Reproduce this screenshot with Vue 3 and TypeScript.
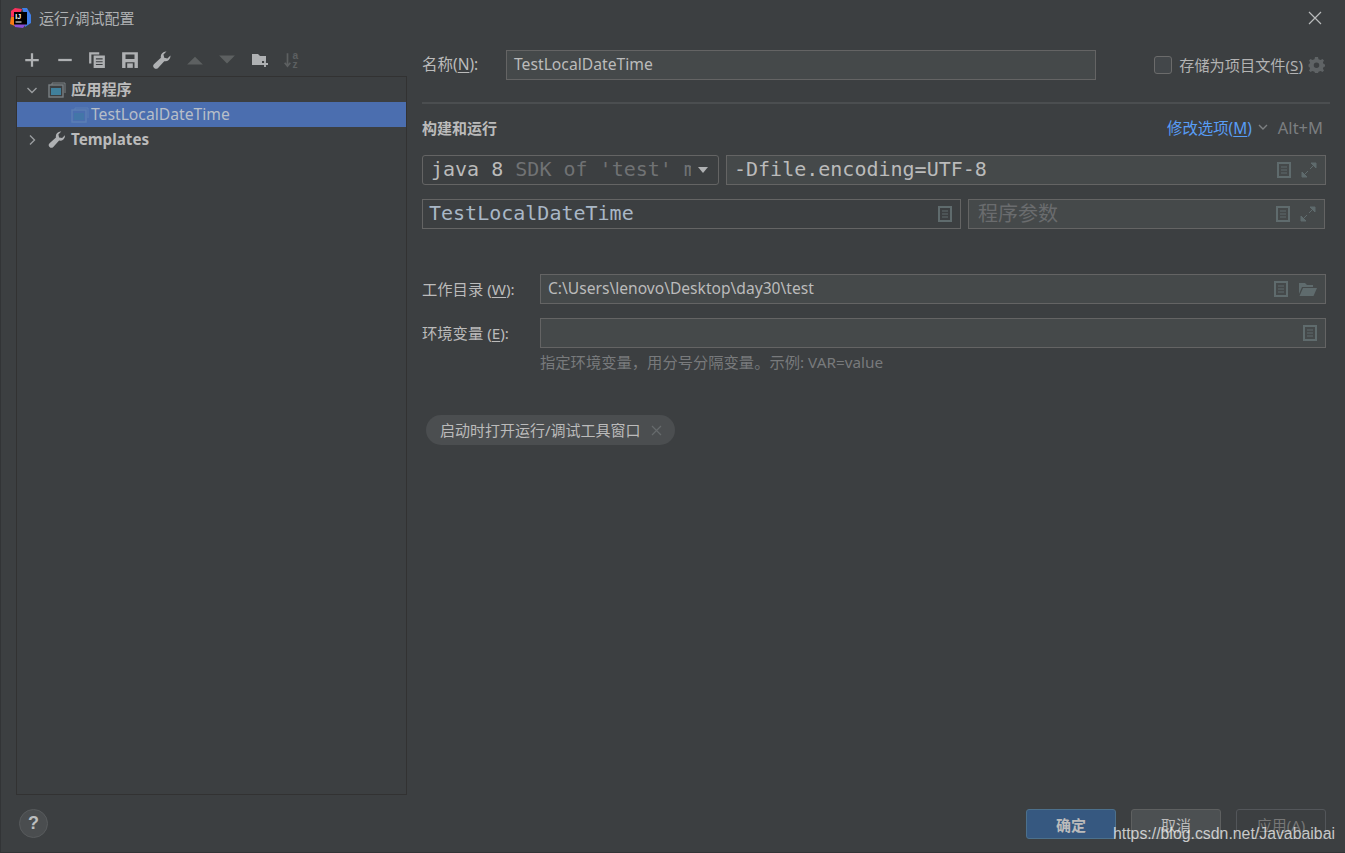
<script setup lang="ts">
const ui = 'x'
void ui
</script>

<template>
  <div class="dialog">
    <header class="titlebar">
      <svg class="logo" width="21" height="20" viewBox="0 0 21 20">
        <path d="M1 3 L5 0 L12 1 L9 8 L1 9 Z" fill="#fe315d" />
        <path d="M12 0 L17 0 L21 7 L21 15 L15 19 L14 6 Z" fill="#3f7fe8" />
        <path d="M1 9 L5 9 L5 18 L0 16 Z" fill="#f97a12" />
        <path d="M4 16 L16 16 L13 20 L5 19 Z" fill="#8a4fd8" />
        <rect x="4" y="4" width="13" height="12.5" fill="#000" />
        <rect x="5.5" y="13.5" width="6" height="1" fill="#fff" />
        <text x="5.2" y="11" class="logotext">IJ</text>
      </svg>
      <span class="title">运行/调试配置</span>
      <svg class="close" width="14" height="14" viewBox="0 0 14 14">
        <path d="M1 1 L13 13 M13 1 L1 13" stroke="#b9bbbc" stroke-width="1.2" fill="none" />
      </svg>
    </header>

    <div class="body">
      <aside class="left">
        <div class="toolbar">
          <svg class="tool" viewBox="0 0 16 16"><path d="M8 2 V14 M2 8 H14" stroke="#afb1b3" stroke-width="2" /></svg>
          <svg class="tool" viewBox="0 0 16 16"><path d="M2 8 H14" stroke="#afb1b3" stroke-width="2" /></svg>
          <svg class="tool" viewBox="0 0 16 16"><path d="M1 1 H10 V3 H3 V11 H1 Z M5 4 H15 V15 H5 Z" fill="#afb1b3" /><path d="M7 7 H13 M7 9.5 H13 M7 12 H13" stroke="#3c3f41" stroke-width="1" /></svg>
          <svg class="tool" viewBox="0 0 16 16"><path fill-rule="evenodd" d="M1 1 H15 V15 H1 Z M4 3 V7 H12 V3 Z M4 10 V15 H12 V10 Z" fill="#afb1b3" /><rect x="5.5" y="11" width="5" height="4" fill="#afb1b3" /></svg>
          <svg class="tool" viewBox="0 0 16 16"><path d="M15.5 4 A4.6 4.6 0 0 1 10 9 L4.5 15 A2 2 0 0 1 1 11.5 L7 6 A4.6 4.6 0 0 1 12 0.5 L9.3 3.2 L10 6 L12.8 6.7 Z" fill="#afb1b3" /></svg>
          <svg class="tool" viewBox="0 0 16 16"><path d="M1 12 L8 5 L15 12 Z" fill="#5d6061" /></svg>
          <svg class="tool" viewBox="0 0 16 16"><path d="M1 4 L8 11 L15 4 Z" fill="#5d6061" /></svg>
          <svg class="tool" viewBox="0 0 18 16"><path d="M1 2 H7 L9 4 H15 V9 H11 V13 H1 Z" fill="#afb1b3" /><path d="M14 9 V15 M11 12 H17" stroke="#afb1b3" stroke-width="1.8" /></svg>
          <svg class="tool" viewBox="0 0 16 16"><path d="M4 2 V13 M1.5 10.5 L4 13.5 L6.5 10.5" stroke="#5d6061" stroke-width="1.5" fill="none" /><text x="8.5" y="7" class="az">a</text><text x="8.5" y="15" class="az">z</text></svg>
        </div>
        <div class="tree">
          <div class="node bold">
            <svg class="arrow" width="12" height="12" viewBox="0 0 12 12"><path d="M1.5 4 L6 8.5 L10.5 4" stroke="#9a9d9f" stroke-width="1.4" fill="none" /></svg>
            <svg class="nodeicon" width="18" height="16" viewBox="0 0 18 16">
              <path d="M4 1 H17 V11 M4 1 V3" stroke="#7a8184" stroke-width="1" fill="none" />
              <rect x="1" y="3" width="14" height="12" fill="#3c3f41" stroke="#7a8184" stroke-width="1.4" />
              <rect x="3" y="6" width="10" height="7" fill="#40809c" />
            </svg>
            <span class="cjknode">应用程序</span>
          </div>
          <div class="node selected">
            <svg class="nodeicon" width="18" height="16" viewBox="0 0 18 16">
              <path d="M4 1 H17 V11 M4 1 V3" stroke="#5d7fb5" stroke-width="1" fill="none" />
              <rect x="1" y="3" width="14" height="12" fill="#4b6eaf" stroke="#5d7fb5" stroke-width="1.4" />
              <rect x="3" y="6" width="10" height="7" fill="#4376a8" />
            </svg>
            <span class="latinnode">TestLocalDateTime</span>
          </div>
          <div class="node bold">
            <svg class="arrow" width="12" height="12" viewBox="0 0 12 12"><path d="M4 1.5 L8.5 6 L4 10.5" stroke="#9a9d9f" stroke-width="1.4" fill="none" /></svg>
            <svg class="nodeicon" width="18" height="17" viewBox="0 0 16 16"><path d="M15.5 4 A4.6 4.6 0 0 1 10 9 L4.5 15 A2 2 0 0 1 1 11.5 L7 6 A4.6 4.6 0 0 1 12 0.5 L9.3 3.2 L10 6 L12.8 6.7 Z" fill="#afb1b3" /></svg>
            <span class="latinnode">Templates</span>
          </div>
        </div>
      </aside>

      <main class="right">
        <div class="namerow">
          <label class="namelabel">名称(<u>N</u>):</label>
          <div class="field namefield"><span class="grow">TestLocalDateTime</span></div>
          <div class="store">
            <span class="check"></span>
            <span class="storetext">存储为项目文件(<u>S</u>)</span>
            <svg width="18" height="18" viewBox="0 0 18 18">
              <path fill-rule="evenodd" d="M7 1 H10 L10.5 3.2 L12.6 4 L14.5 2.9 L16 4.5 L14.9 6.3 L15.6 8 L17 8.5 V10.5 L15.6 11 L14.9 12.7 L16 14.5 L14.5 16 L12.6 14.9 L10.5 15.7 L10 17 H7 L6.5 15.7 L4.4 14.9 L2.5 16 L1 14.5 L2.1 12.7 L1.4 11 L0.5 10.5 V8.5 L1.4 8 L2.1 6.3 L1 4.5 L2.5 2.9 L4.4 4 L6.5 3.2 Z M8.5 6.5 A2.7 2.7 0 1 0 8.5 12 A2.7 2.7 0 1 0 8.5 6.5 Z" fill="#5f6365" />
            </svg>
          </div>
        </div>

        <div class="separator"></div>

        <div class="sectionhead">
          <span class="sectiontitle">构建和运行</span>
          <span class="modify">修改选项(<u>M</u>)</span>
          <svg class="chev" width="10" height="8" viewBox="0 0 10 8"><path d="M1 2 L5 6 L9 2" stroke="#7d8082" stroke-width="1.4" fill="none" /></svg>
          <span class="shortcut">Alt+M</span>
        </div>

        <div class="monorow">
          <div class="combo">
            <span class="sdk">java 8 <span class="sdkdim">SDK of 'test' m</span></span>
            <svg width="10" height="6" viewBox="0 0 10 6"><path d="M0 0 H10 L5 6 Z" fill="#afb1b3" /></svg>
          </div>
          <div class="field mono vm">
            <span class="grow">-Dfile.encoding=UTF-8</span>
            <svg class="ficon" width="14" height="16" viewBox="0 0 14 16"><path fill-rule="evenodd" d="M0 0 H14 V16 H0 Z M2 2 V14 H12 V2 Z" fill="#5f6b6d" /><path d="M4 5 H10 M4 8 H10 M4 11 H10" stroke="#5f6b6d" stroke-width="1.2" /></svg>
            <svg class="ficon" width="16" height="16" viewBox="0 0 16 16"><path d="M10 1 H15 V6 Z M1 10 V15 H6 Z M12 4 L9 7 M4 12 L7 9" stroke="#5f6b6d" stroke-width="1" fill="#5f6b6d" /></svg>
          </div>
        </div>

        <div class="monorow second">
          <div class="field mono mainclass">
            <span class="grow">TestLocalDateTime</span>
            <svg class="ficon" width="14" height="16" viewBox="0 0 14 16"><path fill-rule="evenodd" d="M0 0 H14 V16 H0 Z M2 2 V14 H12 V2 Z" fill="#5f6b6d" /><path d="M4 5 H10 M4 8 H10 M4 11 H10" stroke="#5f6b6d" stroke-width="1.2" /></svg>
          </div>
          <div class="field args">
            <span class="grow placeholder">程序参数</span>
            <svg class="ficon" width="14" height="16" viewBox="0 0 14 16"><path fill-rule="evenodd" d="M0 0 H14 V16 H0 Z M2 2 V14 H12 V2 Z" fill="#5f6b6d" /><path d="M4 5 H10 M4 8 H10 M4 11 H10" stroke="#5f6b6d" stroke-width="1.2" /></svg>
            <svg class="ficon" width="16" height="16" viewBox="0 0 16 16"><path d="M10 1 H15 V6 Z M1 10 V15 H6 Z M12 4 L9 7 M4 12 L7 9" stroke="#5f6b6d" stroke-width="1" fill="#5f6b6d" /></svg>
          </div>
        </div>

        <div class="formrow workdir">
          <label class="formlabel">工作目录 (<u>W</u>):</label>
          <div class="field wide">
            <span class="grow">C:\Users\lenovo\Desktop\day30\test</span>
            <svg class="ficon" width="14" height="16" viewBox="0 0 14 16"><path fill-rule="evenodd" d="M0 0 H14 V16 H0 Z M2 2 V14 H12 V2 Z" fill="#5f6b6d" /><path d="M4 5 H10 M4 8 H10 M4 11 H10" stroke="#5f6b6d" stroke-width="1.2" /></svg>
            <svg class="ficon" width="19" height="15" viewBox="0 0 19 15"><path d="M1 1 H7 L9 3 H15 V5 H4 L1 12 Z" fill="#5f6b6d" /><path d="M5 6 H19 L15.5 14 H1.5 Z" fill="#5f6b6d" /></svg>
          </div>
        </div>

        <div class="formrow envrow">
          <label class="formlabel">环境变量 (<u>E</u>):</label>
          <div class="field wide">
            <span class="grow"></span>
            <svg class="ficon" width="14" height="16" viewBox="0 0 14 16"><path fill-rule="evenodd" d="M0 0 H14 V16 H0 Z M2 2 V14 H12 V2 Z" fill="#5f6b6d" /><path d="M4 5 H10 M4 8 H10 M4 11 H10" stroke="#5f6b6d" stroke-width="1.2" /></svg>
          </div>
        </div>
        <div class="hint">指定环境变量，用分号分隔变量。示例: VAR=value</div>

        <div class="chip">
          <span class="chiptext">启动时打开运行/调试工具窗口</span>
          <svg width="11" height="11" viewBox="0 0 11 11"><path d="M1 1 L10 10 M10 1 L1 10" stroke="#666a6c" stroke-width="1.2" /></svg>
        </div>
      </main>
    </div>

    <footer class="footer">
      <span class="help">?</span>
      <button class="btn primary">确定</button>
      <button class="btn">取消</button>
      <button class="btn disabled">应用(A)</button>
    </footer>

    <span class="watermark">https://blog.csdn.net/Javabaibai</span>
  </div>
</template>

<style scoped>
.dialog {
  position: relative;
  box-sizing: border-box;
  width: 1345px;
  height: 853px;
  display: flex;
  flex-direction: column;
  background: #3c3f41;
  border-left: 1px solid #323436;
  border-bottom: 1px solid #323436;
  color: #bbbbbb;
  font-family: "Noto Sans", "Noto Sans CJK SC", sans-serif;
  font-size: 15px;
  overflow: hidden;
}
u { text-underline-offset: 2px; }
.titlebar {
  height: 36px;
  flex: none;
  display: flex;
  align-items: center;
  padding: 0 23px 0 9px;
}
.logo { margin-right: 8px; margin-top: -1px; }
.logotext { font: bold 7px "Liberation Sans", sans-serif; fill: #fff; }
.title { font-size: 15px; color: #afb1b3; flex: 1; margin-top: -1px; }
.close { flex: none; }

.body { flex: 1; display: flex; min-height: 0; }
.left {
  width: 391px;
  margin-left: 15px;
  display: flex;
  flex-direction: column;
}
.toolbar {
  height: 40px;
  flex: none;
  display: flex;
  align-items: center;
  gap: 14.5px;
  padding: 7px 0 0 7px;
  box-sizing: border-box;
}
.tool { width: 18px; height: 18px; flex: none; }
.az { font: bold 9px "Liberation Sans", sans-serif; fill: #5d6061; }
.tree {
  flex: 1;
  border: 1px solid #323232;
  box-sizing: border-box;
}
.node {
  height: 25px;
  display: flex;
  align-items: center;
  padding-left: 9px;
  font-size: 15.2px;
}
.node.bold { font-weight: 700; color: #bbbbbb; }
.cjknode { padding-bottom: 4px; }
.latinnode { padding-bottom: 2px; }
.arrow { margin-right: 10px; flex: none; }
.nodeicon { margin-right: 5px; flex: none; }
.selected { background: #4b6eaf; padding-left: 54px; color: #b7bec8; font-size: 15.7px; }
.selected .nodeicon { margin-right: 2px; }

.right {
  flex: 1;
  margin-left: 15px;
  padding: 14px 15px 0 0;
  min-width: 0;
}
.namerow { display: flex; align-items: center; height: 30px; padding-right: 4px; }
.namelabel { width: 84px; flex: none; font-size: 15.5px; padding-bottom: 4px; }
.field {
  box-sizing: border-box;
  height: 30px;
  display: flex;
  align-items: center;
  background: #45494a;
  border: 1px solid #646464;
  padding: 0 7px;
  color: #bbbbbb;
}
.namefield { width: 590px; font-size: 15.7px; }
.store {
  margin-left: auto;
  display: flex;
  align-items: center;
  font-size: 15.2px;
  color: #b3b3b3;
}
.storetext { padding-bottom: 2px; }
.check {
  box-sizing: border-box;
  width: 18px;
  height: 18px;
  border: 1px solid #6b6b6b;
  border-radius: 3px;
  background: #43474a;
  margin-right: 7px;
}
.store svg { margin-left: 5px; }
.separator { height: 2px; background: #4b4e50; margin-top: 22px; }

.sectionhead {
  box-sizing: border-box;
  height: 24px;
  margin-top: 13px;
  display: flex;
  align-items: center;
  padding: 0 7px 4px 0;
}
.sectiontitle { font-weight: 700; font-size: 15px; margin-right: auto; }
.modify { color: #589df6; font-size: 15.4px; }
.chev { margin: 0 10px 0 6px; }
.shortcut { color: #7b7e80; font-size: 16.5px; }

.monorow {
  display: flex;
  gap: 7px;
  margin-top: 14px;
  padding-right: 4px;
}
.second { padding-right: 5px; }
.combo {
  box-sizing: border-box;
  width: 297px;
  height: 30px;
  flex: none;
  display: flex;
  align-items: center;
  justify-content: space-between;
  padding: 0 10px 0 8px;
  border: 1px solid #646464;
  border-radius: 3px;
  font: 20px "DejaVu Sans Mono", monospace;
  color: #bbbbbb;
  overflow: hidden;
}
.sdk { white-space: pre; overflow: hidden; width: 260px; padding-bottom: 2px; }
.sdkdim { color: #707274; }
.mono { font: 20px "DejaVu Sans Mono", monospace; }
.vm { flex: 1; padding-left: 7px; }
.grow { flex: 1; min-width: 0; white-space: nowrap; padding-bottom: 2px; }
.ficon { margin-left: 10px; flex: none; }
.ficon:last-child { margin-right: 1px; }
.mainclass {
  width: 539px;
  flex: none;
  background: #3c3f41;
  color: #a9b7c6;
  padding-left: 6px;
}
.args { flex: 1; padding-left: 9px; }
.placeholder { color: #6a6c6e; font-size: 20px; padding-bottom: 4px; }

.formrow { display: flex; align-items: center; padding-right: 4px; }
.workdir { margin-top: 45px; }
.envrow { margin-top: 14px; }
.formlabel { width: 118px; flex: none; font-size: 15.3px; padding-bottom: 3px; }
.wide { flex: 1; font-size: 15.6px; }
.hint {
  margin: 5px 0 0 118px;
  color: #787a7c;
  font-size: 15.3px;
  line-height: 19px;
}
.chip {
  display: inline-flex;
  align-items: center;
  gap: 10px;
  box-sizing: border-box;
  height: 30px;
  margin: 43px 0 0 4px;
  padding: 0 13px 0 14px;
  border-radius: 15px;
  background: #4b4e50;
  color: #bbbbbb;
  font-size: 15px;
}
.chiptext { padding-bottom: 2px; }

.footer {
  flex: none;
  height: 57px;
  display: flex;
  align-items: flex-start;
  gap: 15px;
  padding: 14px 19px 0 18px;
  box-sizing: border-box;
}
.help {
  box-sizing: border-box;
  width: 29px;
  height: 29px;
  border-radius: 50%;
  background: #4a4d4f;
  border: 1px solid #585b5d;
  display: flex;
  align-items: center;
  justify-content: center;
  font: bold 18px "Liberation Sans", sans-serif;
  color: #bcbebf;
  margin-right: auto;
}
.btn {
  box-sizing: border-box;
  width: 90px;
  height: 30px;
  border-radius: 3px;
  border: 1px solid #5e6060;
  background: #4c5052;
  color: #bbbbbb;
  font: 15px "Noto Sans", "Noto Sans CJK SC", sans-serif;
  padding: 0;
}
.primary { background: #365880; border-color: #4c708c; font-weight: 700; }
.disabled { background: #3c3f41; border-color: #53565a; color: #777777; }
.watermark {
  position: absolute;
  left: 1112px;
  top: 824px;
  font: 15.85px "Liberation Sans", sans-serif;
  line-height: 20px;
  color: rgba(255, 255, 255, 0.72);
  white-space: nowrap;
}
</style>

<style>
html, body { background: #3c3f41; overflow: hidden; }
</style>
